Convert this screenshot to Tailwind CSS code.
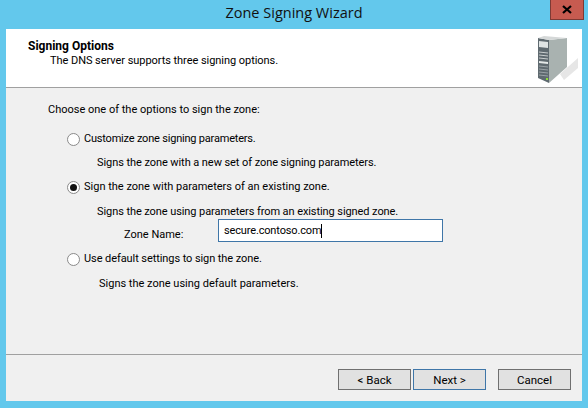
<!DOCTYPE html>
<html lang="en">
<head>
    <meta charset="UTF-8">
    <title>Zone Signing Wizard</title>
    <script src="https://cdn.jsdelivr.net/npm/@tailwindcss/browser@4"></script>
</head>
<body class="bg-[#63c8ec] overflow-hidden">
    <div class="w-[588px] h-[408px] flex flex-col font-['Roboto',sans-serif] text-[11px] leading-[14px] text-black">
        <!-- Title bar -->
        <div class="h-[29px] shrink-0 relative flex justify-center">
            <span class="pt-[3px] text-[14.5px] leading-[20px] text-[#111] font-['Open_Sans',sans-serif]">Zone Signing Wizard</span>
            <div class="absolute right-[4px] top-0 w-[34px] h-[20px] bg-[#c75b50] border border-t-0 border-[#7d3a34] flex items-center justify-center">
                <svg width="10" height="9" viewBox="0 0 10 9"><path d="M1 1l8 7M9 1l-8 7" stroke="#000" stroke-width="2.2" fill="none"/></svg>
            </div>
        </div>

        <!-- Client area -->
        <div class="ml-[6px] w-[576px] h-[372px] bg-[#f0f0f0] flex flex-col">
            <!-- Header -->
            <div class="h-[59px] shrink-0 bg-white border-b border-[#a0a0a0] flex justify-between">
                <div class="pl-[22px] pt-[10px]">
                    <div class="font-bold text-[12px]">Signing Options</div>
                    <div class="pl-[22px] pt-[1px] tracking-[-0.05px]">The DNS server supports three signing options.</div>
                </div>
                <svg class="mr-[4px] mt-[5px]" width="42" height="50" viewBox="0 0 42 50">
                    <path d="M24 40L42 24V34L28 46Z" fill="#e6e6e6"/>
                    <path d="M2 4L13 6V49L2 44Z" fill="#5f6a70"/>
                    <path d="M13 6L31 4V33L13 49Z" fill="#a9b2b0"/>
                    <path d="M2 4L8 2L31 4L13 6Z" fill="#d5d8d8"/>
                    <path d="M3 7L12 8V14L3 13Z" fill="#dfe4e4"/>
                    <path d="M3 18L12 19M3 21L12 22M3 24L12 25" stroke="#c9cdce"/>
                    <path d="M3 27L12 28V30L3 29Z" fill="#e4e8e8"/>
                    <path d="M3 32L12 33M3 35L12 36M3 38L12 39M3 41L12 42" stroke="#9aa2a6"/>
                    <rect x="10" y="44" width="2" height="2" fill="#8fe03a"/>
                </svg>
            </div>

            <!-- Options -->
            <div class="flex-1 pl-[42px] pt-[15px]">
                <div>Choose one of the options to sign the zone:</div>

                <div class="flex items-center gap-[4px] pl-[19px] mt-[15px]">
                    <span class="w-[13px] h-[13px] rounded-full border border-[#8a8a8a] bg-white"></span>
                    <span class="tracking-[-0.2px]">Customize zone signing parameters.</span>
                </div>
                <div class="pl-[49px] mt-[10px] tracking-[-0.07px]">Signs the zone with a new set of zone signing parameters.</div>

                <div class="flex items-center gap-[4px] pl-[19px] mt-[10px]">
                    <span class="w-[13px] h-[13px] rounded-full border border-[#8a8a8a] bg-white flex items-center justify-center">
                        <span class="w-[7px] h-[7px] rounded-full bg-[#111]"></span>
                    </span>
                    <span>Sign the zone with parameters of an existing zone.</span>
                </div>
                <div class="pl-[49px] mt-[11px] tracking-[-0.08px]">Signs the zone using parameters from an existing signed zone.</div>

                <div class="flex items-center pl-[76px]">
                    <span class="w-[94px] pt-[9px]">Zone Name:</span>
                    <div class="w-[225px] h-[23px] bg-white border border-[#3f76a8] pl-[5px] flex items-center">
                        <span class="tracking-[-0.15px]">secure.contoso.com</span><span class="w-px h-[14px] bg-black"></span>
                    </div>
                </div>

                <div class="flex items-center gap-[4px] pl-[19px] mt-[10px]">
                    <span class="w-[13px] h-[13px] rounded-full border border-[#8a8a8a] bg-white"></span>
                    <span class="tracking-[-0.08px]">Use default settings to sign the zone.</span>
                </div>
                <div class="pl-[51px] mt-[11px]">Signs the zone using default parameters.</div>
            </div>

            <!-- Buttons -->
            <div class="h-[47px] shrink-0 border-t border-[#a0a0a0] flex items-start justify-end pt-[14px] pr-[11px]">
                <button class="w-[73px] h-[21px] bg-[#e1e1e1] border border-[#707070] text-[11.5px]">&lt; Back</button>
                <button class="w-[73px] h-[21px] ml-[2px] bg-[#e1e1e1] border border-[#3f76a8] text-[11.5px]">Next &gt;</button>
                <button class="w-[73px] h-[21px] ml-[12px] bg-[#e1e1e1] border border-[#707070] text-[11.5px]">Cancel</button>
            </div>
        </div>
    </div>
</body>
</html>
